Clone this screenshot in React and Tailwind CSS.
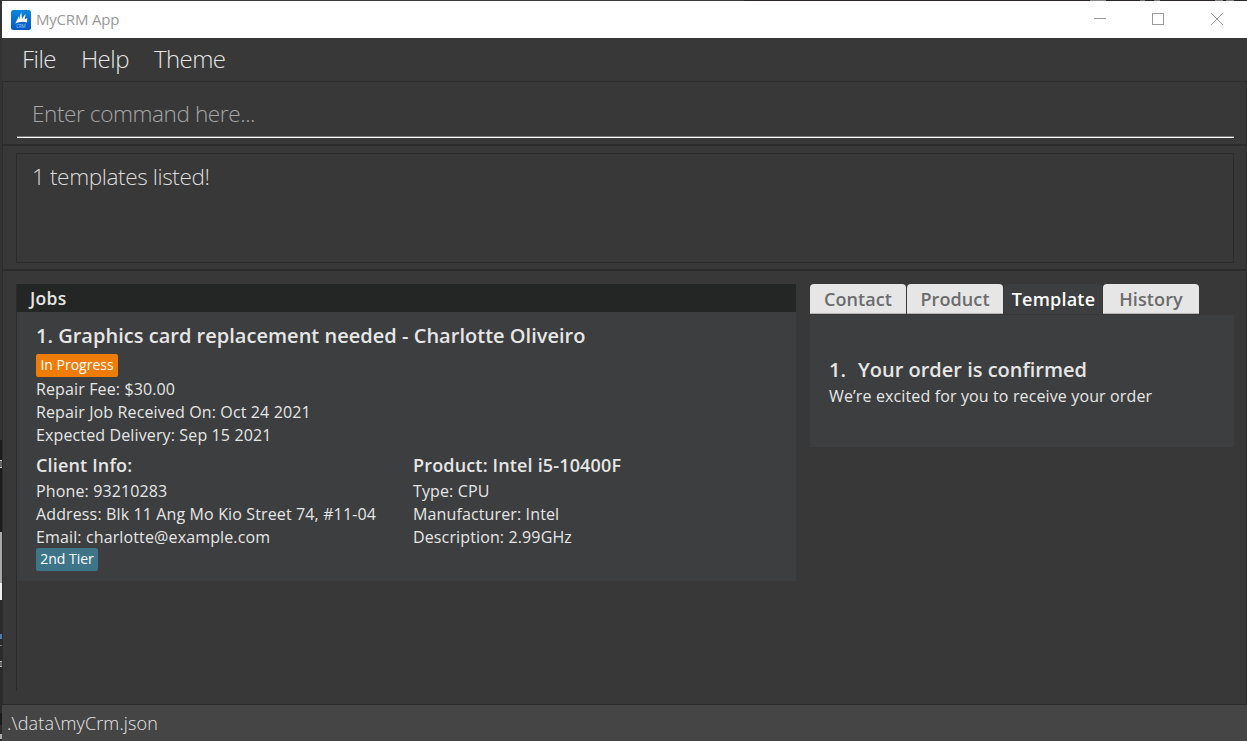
function Logo() {
  return (
    <svg className="h-5 w-5 shrink-0" viewBox="0 0 20 20">
      <defs>
        <linearGradient id="logo" x1="0" y1="0" x2="0" y2="1">
          <stop offset="0" stopColor="#0a86e0" />
          <stop offset="1" stopColor="#0457c4" />
        </linearGradient>
      </defs>
      <rect width="20" height="20" rx="2.5" fill="url(#logo)" />
      <path d="M4.3 13.4 L8 6 L7.8 10.2 L10.2 2 L11 8.8 L14.6 3.8 L13.6 9.6 L16.2 8 L16 12.4 Q10 10.8 4.3 13.4Z" fill="#fff" />
      <text x="10" y="17.8" textAnchor="middle" fontSize="4.4" fill="#a9cdf5" fontFamily="Open Sans, sans-serif">CRM</text>
    </svg>
  );
}

function TopEdge() {
  return (
    <div className="flex h-px shrink-0 bg-[#2a2629]">
      <div className="w-[742px] bg-[#3a3a3a]" />
      <div className="ml-[346px] w-4 bg-[#858585]" />
      <div className="ml-[34px] w-[5px] bg-[#6f6f6f]" />
      <div className="ml-[9px] w-[6px] bg-[#7a7a7a]" />
      <div className="ml-[55px] w-2 bg-[#7a7a7a]" />
      <div className="ml-[3px] w-2 bg-[#7a7a7a]" />
    </div>
  );
}

function TitleBar() {
  return (
    <header className="flex h-[37px] shrink-0 items-center bg-white pl-[9px]">
      <Logo />
      <span className="-mt-0.5 ml-[5px] text-[15px] leading-5 tracking-[-0.2px] text-[#999999]">MyCRM App</span>
      <svg className="-mt-px mr-[22px] ml-auto h-[14px] w-[131px]" viewBox="0 0 131 14" fill="none" stroke="#999999" shapeRendering="crispEdges">
        <path d="M0 6.5H12" />
        <rect x="58.5" y="1.5" width="11" height="11" />
        <path d="M117 1L129 13M129 1L117 13" shapeRendering="auto" />
      </svg>
    </header>
  );
}

function MenuBar() {
  return (
    <nav className="flex h-[43px] shrink-0 items-center gap-[25px] pb-0.5 pl-5 text-[24px] font-light leading-8 tracking-[-0.55px] text-[#e6e6e6]">
      <span>File</span>
      <span>Help</span>
      <span>Theme</span>
    </nav>
  );
}

function CommandBox() {
  return (
    <section className="h-[65px] shrink-0 border-x border-t border-b-2 border-[#2c2c2c] pr-3 pl-[14px]">
      <div className="h-[55px] border-b border-[#777777] pt-4 pl-[15px] text-[22.6px] font-light leading-8 tracking-[-0.43px] text-[#a5a5a5]">
        Enter command here...
      </div>
      <div className="h-px bg-white" />
    </section>
  );
}

function ResultBox() {
  return (
    <section className="h-[125px] shrink-0 border-x border-b-2 border-[#2c2c2c] pt-[7px] pr-3 pl-[13px]">
      <div className="h-[110px] border border-[#2b2b2b] pt-[7px] pl-[15px] text-[22.6px] font-light leading-8 tracking-[-0.4px] text-[#dcdcdc]">
        1 templates listed!
      </div>
    </section>
  );
}

function JobCard() {
  return (
    <article className="h-[269px] bg-[#3c3e3f] pt-[10px] pl-[19px] text-[16px] leading-[23px] tracking-[0.13px] text-[#e6e6e6]">
      <h2 className="text-[20px] font-semibold leading-7 tracking-[0.02px]">1. Graphics card replacement needed - Charlotte Oliveiro</h2>
      <div className="mt-1 flex h-[23px] w-[82px] justify-center rounded-[2px] bg-[#ee7c07] text-[14px] leading-[22px] tracking-normal whitespace-nowrap text-white">In Progress</div>
      <p className="mt-px">Repair Fee: $30.00</p>
      <p>Repair Job Received On: Oct 24 2021</p>
      <p>Expected Delivery: Sep 15 2021</p>
      <div className="mt-[5px] grid grid-cols-[377px_1fr]">
        <div>
          <h3 className="mb-0.5 text-[18px] font-semibold leading-[26px] tracking-[0.16px]">Client Info:</h3>
          <p>Phone: 93210283</p>
          <p>Address: Blk 11 Ang Mo Kio Street 74, #11-04</p>
          <p>Email: charlotte@example.com</p>
          <div className="-mt-px flex h-[23px] w-[62px] justify-center rounded-[2px] bg-[#3e7589] text-[14px] leading-[22px] tracking-normal whitespace-nowrap text-white">2nd Tier</div>
        </div>
        <div>
          <h3 className="mb-0.5 text-[18px] font-semibold leading-[26px] tracking-[0.16px]">Product: Intel i5-10400F</h3>
          <p>Type: CPU</p>
          <p>Manufacturer: Intel</p>
          <p>Description: 2.99GHz</p>
        </div>
      </div>
    </article>
  );
}

function JobsPanel() {
  return (
    <section className="h-[407px] w-[780px] shrink-0 border-l border-[#2b2b2b]">
      <h1 className="h-7 bg-[#242625] pl-[13px] text-[17.5px] font-semibold leading-7 tracking-[0.3px] text-[#e6e6e6]">Jobs</h1>
      <JobCard />
    </section>
  );
}

function Tab({ label, active }) {
  return (
    <div
      className={
        active
          ? "flex h-[30px] w-[98px] items-center justify-center rounded-t bg-[#3c3e3f] pl-px text-[18px] font-semibold tracking-[0.2px] text-white"
          : "flex h-[30px] w-24 items-center justify-center rounded-t border-b border-[#b5b5b5] bg-[#e6e6e6] pt-0.5 text-[18px] font-semibold tracking-[0.1px] text-[#6c6c6c]"
      }
    >
      {label}
    </div>
  );
}

function SidePanel() {
  return (
    <section className="w-[424px] shrink-0">
      <div className="flex gap-px">
        <Tab label="Contact" />
        <Tab label="Product" />
        <Tab label="Template" active />
        <Tab label="History" />
      </div>
      <div className="mt-px h-[132px] bg-[#3c3e3f] pt-[41px] pl-[19px] text-[#e6e6e6]">
        <h2 className="flex gap-3 text-[20px] font-semibold leading-7">
          <span>1.</span>
          <span>Your order is confirmed</span>
        </h2>
        <p className="mt-px text-[16px] leading-[23px] tracking-[0.13px]">We’re excited for you to receive your order</p>
      </div>
    </section>
  );
}

function WindowEdge() {
  return (
    <div className="flex w-[2px] shrink-0 flex-col bg-[#2b2b2b]">
      <div className="h-[440px] bg-[#333333]" />
      <div className="h-[20px] bg-[#1c1c1c]" />
      <div className="h-[8px] border-y border-[#cccccc] bg-[#666666]" />
      <div className="h-[64px] bg-[#1c1c1c]" />
      <div className="h-[51px] bg-[#aaaaaa]" />
      <div className="h-[17px] bg-[#f0f0f0]" />
      <div className="mt-[34px] h-[5px] bg-[#4e7ca8]" />
      <div className="mt-[6px] h-px bg-[#777777]" />
      <div className="mt-[15px] h-[6px] border-y border-[#bbbbbb] bg-[#666666]" />
      <div className="mt-[46px] h-[12px] bg-[#1a1a1a]" />
      <div className="mt-[9px] h-[5px] bg-[#aaaaaa]" />
    </div>
  );
}

export default function App() {
  return (
    <div className="flex h-[741px] w-[1247px] overflow-hidden bg-[#383838] font-['Open_Sans',sans-serif]">
      <WindowEdge />
      <div className="flex min-w-0 flex-1 flex-col">
        <TopEdge />
        <TitleBar />
        <MenuBar />
        <CommandBox />
        <ResultBox />
        <main className="flex h-[434px] shrink-0 gap-[14px] border-x border-b border-[#2c2c2c] pt-[13px] pl-[13px]">
          <JobsPanel />
          <SidePanel />
        </main>
        <footer className="flex-1 bg-[#454545] pl-[5px] text-[18px] font-light leading-9 tracking-[0.15px] text-[#e6e6e6]">.\data\myCrm.json</footer>
      </div>
    </div>
  );
}
